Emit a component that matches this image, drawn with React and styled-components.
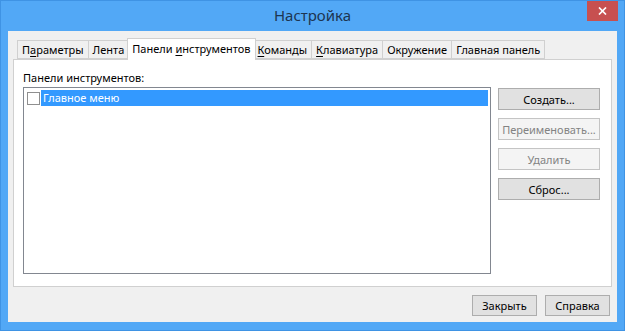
import React from "react";
import styled, { createGlobalStyle } from "styled-components";

const Global = createGlobalStyle`
  html, body { margin: 0; padding: 0; background: #52a8f6; }
  body { font-family: "Noto Sans", "Open Sans", sans-serif; }
  * { box-sizing: border-box; }
`;

const Window = styled.div`
  width: 625px;
  height: 331px;
  background: #52a8f6;
  border: 1px solid #3f93e4;
  display: flex;
  flex-direction: column;
`;

const TitleBar = styled.div`
  height: 30px;
  display: grid;
  grid-template-columns: 1fr auto 1fr;
  align-items: start;
`;

const Title = styled.div`
  grid-column: 2;
  font-family: "Noto Sans", sans-serif;
  font-size: 15px;
  line-height: 28px;
  color: #1d3550;
`;

const CloseButton = styled.div`
  grid-column: 3;
  justify-self: end;
  width: 31px;
  height: 20px;
  margin-right: 6px;
  background: #c75050;
  display: flex;
  align-items: center;
  justify-content: center;
`;

const Client = styled.div`
  flex: 1;
  margin: 0 7px 8px 7px;
  background: #f0f0f0;
  padding: 7px 5px 6px 5px;
  display: flex;
  flex-direction: column;
  font-family: "Noto Sans", sans-serif;
  font-size: 11px;
  color: #000;
`;

const TabStrip = styled.div`
  height: 21px;
  display: flex;
  align-items: flex-end;
  padding-left: 4px;
  position: relative;
  z-index: 1;
`;

const Tab = styled.div`
  height: ${(p) => (p.$active ? "22px" : "19px")};
  padding: 0 ${(p) => (p.$active ? "4px" : "4px")};
  margin-right: ${(p) => (p.$active ? "-2px" : "0")};
  margin-bottom: ${(p) => (p.$active ? "-1px" : "0")};
  margin-left: ${(p) => (p.$first ? "0" : p.$active ? "-2px" : "-1px")};
  background: ${(p) => (p.$active ? "#ffffff" : "#f0f0f0")};
  border: 1px solid #d0d0d0;
  border-bottom: ${(p) => (p.$active ? "none" : "1px solid #d0d0d0")};
  display: flex;
  align-items: center;
  line-height: 1;
  padding-bottom: ${(p) => (p.$active ? "3px" : "0")};
  position: relative;
  z-index: ${(p) => (p.$active ? 2 : 1)};
  white-space: nowrap;
  u { text-decoration: underline; text-underline-offset: 2px; }
`;

const Panel = styled.div`
  flex: 1;
  background: #ffffff;
  border: 1px solid #d0d0d0;
  padding: 10px 11px 12px 9px;
  display: flex;
  flex-direction: column;
`;

const Label = styled.div`
  line-height: 15px;
  margin-bottom: 2px;
`;

const PanelBody = styled.div`
  flex: 1;
  display: flex;
  gap: 7px;
`;

const ListBox = styled.div`
  flex: 1;
  border: 1px solid #828790;
  padding: 2px 2px;
`;

const ListRow = styled.div`
  display: flex;
  align-items: center;
  height: 16px;
  gap: 1px;
`;

const Check = styled.div`
  width: 13px;
  height: 13px;
  border: 1px solid #8f8f8f;
  background: #fff;
  margin-left: 1px;
`;

const RowText = styled.div`
  flex: 1;
  height: 16px;
  background: ${(p) => (p.$selected ? "#3399ff" : "transparent")};
  color: ${(p) => (p.$selected ? "#fff" : "#000")};
  line-height: 16px;
  padding-left: 2px;
`;

const ButtonColumn = styled.div`
  width: 102px;
  padding-top: 1px;
  display: flex;
  flex-direction: column;
  gap: 8px;
`;

const Button = styled.div`
  height: ${(p) => p.$h || 22}px;
  width: ${(p) => (p.$w ? p.$w + "px" : "auto")};
  border: 1px solid ${(p) => (p.$disabled ? "#c4c4c4" : "#adadad")};
  background: ${(p) => (p.$disabled ? "#f4f4f4" : "#e1e1e1")};
  color: ${(p) => (p.$disabled ? "#838383" : "#000")};
  display: flex;
  align-items: center;
  justify-content: center;
  white-space: nowrap;
`;

const Footer = styled.div`
  display: flex;
  justify-content: flex-end;
  gap: 8px;
  padding: 8px 2px 0 0;
`;

const tabs = [
  { key: "p", label: <span>П<u>а</u>раметры</span> },
  { key: "l", label: <span>Лента</span> },
  { key: "t", label: <span>Панели <u>и</u>нструментов</span>, active: true },
  { key: "k", label: <span><u>К</u>оманды</span> },
  { key: "kl", label: <span><u>К</u>лавиатура</span> },
  { key: "o", label: <span>Окружение</span> },
  { key: "g", label: <span>Главная панель</span> },
];

export default function App() {
  return (
    <>
      <Global />
      <Window>
        <TitleBar>
          <Title>Настройка</Title>
          <CloseButton>
            <svg width="9" height="8" viewBox="0 0 9 8">
              <path d="M1 0.5 L8 7.5 M8 0.5 L1 7.5" stroke="#fff" strokeWidth="1.7" />
            </svg>
          </CloseButton>
        </TitleBar>
        <Client>
          <TabStrip>
            {tabs.map((t, i) => (
              <Tab key={t.key} $active={t.active} $first={i === 0}>
                {t.label}
              </Tab>
            ))}
          </TabStrip>
          <Panel>
            <Label>Панели инструментов:</Label>
            <PanelBody>
              <ListBox>
                <ListRow>
                  <Check />
                  <RowText $selected>Главное меню</RowText>
                </ListRow>
              </ListBox>
              <ButtonColumn>
                <Button>Создать...</Button>
                <Button $disabled>Переименовать...</Button>
                <Button $disabled>Удалить</Button>
                <Button>Сброс...</Button>
              </ButtonColumn>
            </PanelBody>
          </Panel>
          <Footer>
            <Button $w={65} $h={21}>Закрыть</Button>
            <Button $w={65} $h={21}>Справка</Button>
          </Footer>
        </Client>
      </Window>
    </>
  );
}
